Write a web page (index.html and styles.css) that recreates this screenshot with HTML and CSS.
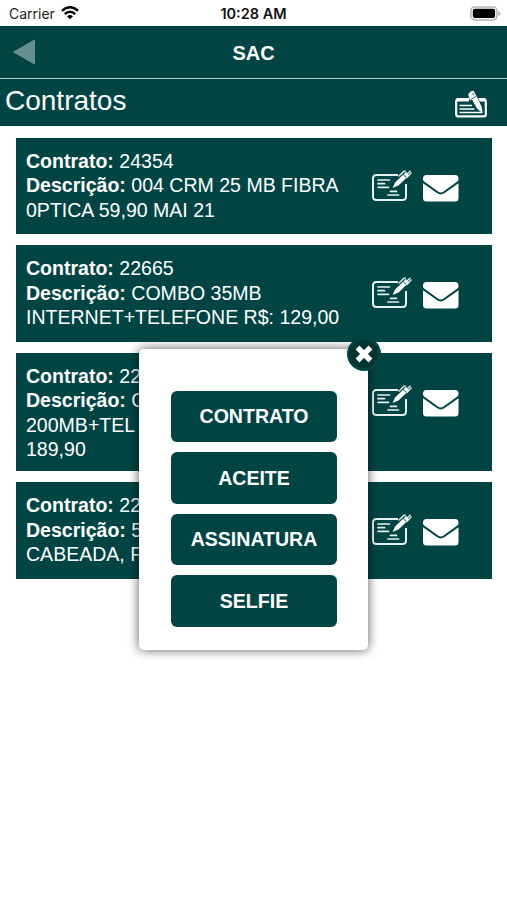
FILE: index.html
```html
<!DOCTYPE html>
<html lang="pt-BR">
<head>
    <meta charset="UTF-8">
    <meta name="viewport" content="width=device-width, initial-scale=1.0">
    <title>SAC - Contratos</title>
    <link rel="stylesheet" href="styles.css">
</head>
<body>
    <!-- Ícones usados nos contratos -->
    <svg class="icon-defs" width="0" height="0">
        <symbol id="icon-sign" viewBox="0 0 42 34">
            <path d="M27 5H5.500Q2 5 2 8.500V26.500Q2 30 5.500 30H31.500Q35 30 35 26.500V14" fill="none" stroke="#e6f0ef" stroke-width="2"/>
            <path d="M7 10H18.500M7 13.700H13.500M7 17.300H17.500M19.500 21.300H25.500M17 25H27.500" stroke="#e6f0ef" stroke-width="1.700" stroke-linecap="round"/>
            <path d="M21.500 18L24.300 12.300L32 4.700L35.300 8L27.500 15.500Z" fill="#fff"/>
            <path d="M32.500 4.200L35 2L38 5L35.800 7.500Z" fill="#fff"/>
            <path d="M27.500 6.500L33 1.200H35M36 4L39.500 0.800M35.500 8L40.500 2.500" fill="none" stroke="#e6f0ef" stroke-width="1.300"/>
        </symbol>
        <symbol id="icon-mail" viewBox="0 0 36 27">
            <path d="M3.500 0H32Q35.500 0 35.500 3.500V4.300Q35.500 5.800 34 6.800L20.500 16.500Q17.800 18.500 15 16.500L1.500 6.800Q0 5.800 0 4.300V3.500Q0 0 3.500 0Z" fill="#fff"/>
            <path d="M0 8.200L14.200 18.300Q17.800 20.600 21.300 18.300L35.500 8.200V23Q35.500 26.500 32 26.500H3.500Q0 26.500 0 23Z" fill="#fff"/>
        </symbol>
    </svg>

    <div class="status-bar">
        <div class="carrier">
            <span>Carrier</span>
            <svg width="18" height="14" viewBox="0 0 18 14">
                <path d="M1 4.700Q9 -2.300 17 4.700" fill="none" stroke="#000" stroke-width="2.500"/>
                <path d="M3.800 8Q9 3.500 14.200 8" fill="none" stroke="#000" stroke-width="2.400"/>
                <path d="M6 10.200Q9 7.800 12 10.200L9 13.300Z" fill="#000"/>
            </svg>
        </div>
        <div class="clock">10:28 AM</div>
        <div class="battery">
            <svg width="31" height="15" viewBox="0 0 31 15">
                <rect x="0.900" y="0.900" width="26" height="13" rx="3.800" fill="#fff" stroke="#b5b5b5" stroke-width="1.500"/>
                <rect x="2.800" y="2.800" width="22.300" height="9.300" rx="2" fill="#000"/>
                <path d="M28.300 5Q30.500 5.700 30.500 7.500T28.300 10Z" fill="#aaa"/>
            </svg>
        </div>
    </div>

    <header class="navbar">
        <svg class="back" width="22" height="26" viewBox="0 0 22 26">
            <path d="M0.500 13L21.500 1V25Z" fill="#669090" stroke="#669090" stroke-width="1" stroke-linejoin="round"/>
        </svg>
        <h1>SAC</h1>
    </header>

    <div class="section-title">
        <h2>Contratos</h2>
        <svg width="32" height="28" viewBox="0 0 32 28">
            <path d="M12 9.500H3Q1.200 9.500 1.200 11.300V24.500Q1.200 26.300 3 26.300H29Q30.800 26.300 30.800 24.500V11.300Q30.800 9.500 29 9.500H24" fill="none" stroke="#fff" stroke-width="2.200"/>
            <path d="M1.500 8H14V11.500H1.500ZM23 8H30.500V11.500H25Z" fill="#fff"/>
            <path d="M4.500 15.500H17M4.500 19H19.500M4.500 22.500H27" stroke="#fff" stroke-width="1.700"/>
            <path d="M13.200 4.500L15.500 1.500L18.500 0.800L21.500 6L26.500 16.500L27.700 23.500L22 18.500L17 9.500L15 10.500Z" fill="#fff"/>
            <path d="M16 9.200L21.500 6.200M17.500 2.800L18.800 5.500" stroke="#004544" stroke-width="0.800"/>
        </svg>
    </div>

    <main class="contracts">
        <div class="contract">
            <p><b>Contrato:</b> 24354<br><b>Descrição:</b> 004 CRM 25 MB FIBRA<br>0PTICA 59,90 MAI 21</p>
            <div class="actions">
                <svg class="sign"><use href="#icon-sign"/></svg>
                <svg class="mail"><use href="#icon-mail"/></svg>
            </div>
        </div>
        <div class="contract">
            <p><b>Contrato:</b> 22665<br><b>Descrição:</b> COMBO 35MB<br>INTERNET+TELEFONE R$: 129,00</p>
            <div class="actions">
                <svg class="sign"><use href="#icon-sign"/></svg>
                <svg class="mail"><use href="#icon-mail"/></svg>
            </div>
        </div>
        <div class="contract">
            <p><b>Contrato:</b> 22<br><b>Descrição:</b> C<br>200MB+TEL<br>189,90</p>
            <div class="actions">
                <svg class="sign"><use href="#icon-sign"/></svg>
                <svg class="mail"><use href="#icon-mail"/></svg>
            </div>
        </div>
        <div class="contract">
            <p><b>Contrato:</b> 22<br><b>Descrição:</b> 5<br>CABEADA, F</p>
            <div class="actions">
                <svg class="sign"><use href="#icon-sign"/></svg>
                <svg class="mail"><use href="#icon-mail"/></svg>
            </div>
        </div>
    </main>

    <!-- Popup de opções do contrato -->
    <div class="popup">
        <button class="close" aria-label="Fechar">
            <svg width="18" height="18" viewBox="0 0 18 18">
                <path d="M2.500 2.500L15.500 15.500M15.500 2.500L2.500 15.500" stroke="#fff" stroke-width="5.400"/>
            </svg>
        </button>
        <button class="option">CONTRATO</button>
        <button class="option">ACEITE</button>
        <button class="option">ASSINATURA</button>
        <button class="option">SELFIE</button>
    </div>
</body>
</html>
```
FILE: styles.css
```css
* {
    box-sizing: border-box;
}
body {
    font-family: "Liberation Sans", Arial, sans-serif;
    margin: 0;
    height: 900px;
    background-color: #ffffff;
    overflow: hidden;
}
.icon-defs {
    position: absolute;
}
.status-bar {
    display: grid;
    grid-template-columns: 1fr auto 1fr;
    align-items: center;
    height: 26px;
    padding: 1px 6px 0 9px;
    font-family: Inter, sans-serif;
    font-size: 14px;
    color: #222;
}
.carrier {
    display: flex;
    align-items: center;
    gap: 6px;
}
.carrier svg {
    margin-bottom: 2px;
}
.clock {
    font-size: 14.500px;
    font-weight: 600;
    color: #111;
    padding-right: 3px;
}
.battery {
    display: flex;
    justify-content: flex-end;
    margin-bottom: 1px;
}
.navbar {
    display: grid;
    grid-template-columns: 1fr auto 1fr;
    align-items: center;
    height: 53px;
    padding: 0 13px;
    background-color: #004544;
    border-bottom: 1px solid #b4c9c8;
    color: #fff;
}
.navbar h1 {
    margin: 3px 0 0;
    font-size: 20px;
}
.section-title {
    display: flex;
    justify-content: space-between;
    height: 46.500px;
    padding: 0 20px 0 5px;
    background-color: #004544;
    color: #fff;
}
.section-title h2 {
    margin: 6px 0 0;
    font-size: 28px;
    font-weight: normal;
    line-height: 32px;
}
.section-title svg {
    margin-top: 11px;
}
.contracts {
    display: flex;
    flex-direction: column;
    gap: 11.300px;
    padding: 12.200px 15px 0 16px;
}
.contract {
    display: flex;
    justify-content: space-between;
    align-items: flex-start;
    min-height: 96.300px;
    padding: 11px 33px 9.500px 10px;
    background-color: #004544;
    color: #fff;
}
.contract p {
    margin: 0;
    font-size: 19.550px;
    line-height: 24.400px;
    white-space: nowrap;
}
.actions {
    display: flex;
    align-items: flex-start;
    gap: 10px;
    padding-top: 21px;
}
.sign {
    width: 42px;
    height: 34px;
}
.mail {
    width: 36px;
    height: 27px;
    margin-top: 5px;
}
.popup {
    position: absolute;
    top: 349px;
    left: 139px;
    width: 229px;
    height: 301px;
    display: flex;
    flex-direction: column;
    gap: 10px;
    padding: 41.500px 31px 0 32px;
    background-color: #fff;
    border-radius: 5px;
    box-shadow: 0 0 11px rgba(0, 0, 0, 0.65);
}
.option {
    height: 51.500px;
    padding: 1px 0 0;
    background-color: #004544;
    color: #fff;
    border: none;
    border-radius: 6px;
    font-family: inherit;
    font-size: 19.550px;
    font-weight: bold;
}
.close {
    position: absolute;
    top: -12px;
    right: -13px;
    width: 34px;
    height: 34px;
    display: flex;
    justify-content: center;
    align-items: center;
    padding: 0;
    background-color: #003433;
    border: 3px solid #004544;
    border-radius: 50%;
}
```
